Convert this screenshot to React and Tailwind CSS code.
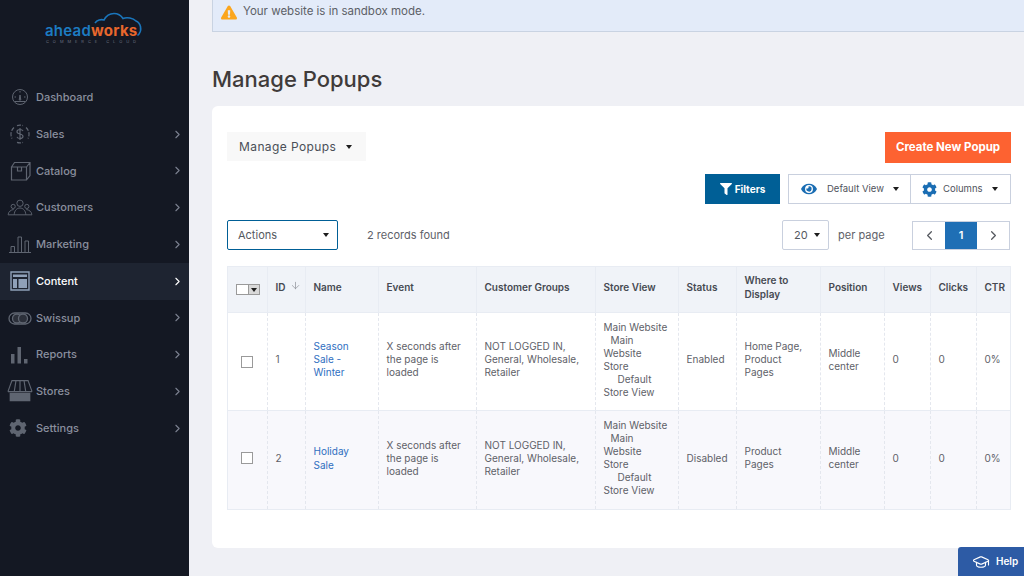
import { ChevronLeft, ChevronRight, ArrowDown, GraduationCap } from "lucide-react";
import { FaCog, FaEye, FaFilter, FaExclamationTriangle } from "react-icons/fa";

const iconCls = "w-[24px] h-[24px] text-[#5f6571]";

function DashboardIcon() {
  return (
    <svg viewBox="0 0 24 24" className={iconCls} fill="none" stroke="currentColor" strokeWidth="1">
      <circle cx="12" cy="12" r="7.5" />
      <path d="M12 6v1.5M6.5 12H8M16 12h1.5M12 10l-.8 5h1.6zM6.5 16.5h11" />
    </svg>
  );
}

function SalesIcon() {
  return (
    <svg viewBox="0 0 24 24" className={iconCls} fill="none" stroke="currentColor" strokeWidth="1.2">
      <path d="M6 5.5a9 9 0 0 0-2 11M18 5.5a9 9 0 0 1 2 11M9 3.6a9 9 0 0 1 6 0M9 20.4a9 9 0 0 0 6 0" strokeDasharray="4 1.5" />
      <path d="M15 9c-.5-1-1.600-1.500-3-1.500-1.700 0-3 .8-3 2.200 0 3 6 1.600 6 4.600 0 1.400-1.300 2.200-3 2.200-1.500 0-2.600-.6-3-1.600M12 6v12" />
    </svg>
  );
}

function CatalogIcon() {
  return (
    <svg viewBox="0 0 24 24" className={iconCls} fill="none" stroke="currentColor" strokeWidth="1.2">
      <path d="M3.500 8h15v13h-15zM3.500 8l3-4.500h15.500v13L18.500 21M18.500 8L22 3.500M9.500 8v4h4V8" />
    </svg>
  );
}

function CustomersIcon() {
  return (
    <svg viewBox="0 0 24 24" className="w-[24px] h-[24px] text-[#5f6571] scale-[1.05]" fill="none" stroke="currentColor" strokeWidth="0.9">
      <circle cx="12" cy="7.500" r="3" />
      <circle cx="5.500" cy="10.500" r="2" />
      <circle cx="18.500" cy="10.500" r="2" />
      <path d="M6.500 18.500c0-4 2.500-6.500 5.500-6.500s5.500 2.500 5.500 6.500zM6 13.500c-2.500 0-5 2-5.500 5h6M18 13.500c2.500 0 5 2 5.500 5h-6" />
    </svg>
  );
}

function MarketingIcon() {
  return (
    <svg viewBox="0 0 24 24" className={iconCls} fill="none" stroke="currentColor" strokeWidth="1">
      <path d="M1 20.500h22M3 20.500v-6h3.500v6M10 20.500V5h3.500v15.500M17 20.500V9h3.500v11.500" />
    </svg>
  );
}

function ContentIcon() {
  return (
    <svg viewBox="0 0 24 24" className="w-[24px] h-[24px] text-[#8fa0b8]" fill="none">
      <path d="M3 3h18v18H3z" stroke="currentColor" strokeWidth="1.400" />
      <path d="M5 5.500h14v2.500H5zM5 10h4v9H5zM10.500 10H19v9h-8.500z" fill="currentColor" />
    </svg>
  );
}

function SwissupIcon() {
  return (
    <svg viewBox="0 0 24 24" className={iconCls} fill="none" stroke="currentColor" strokeWidth="1.300">
      <rect x="1" y="7" width="22" height="11" rx="5.500" />
      <circle cx="9" cy="12.500" r="4.500" fill="#2c303a" />
      <circle cx="15" cy="12.500" r="4.500" fill="#2c303a" />
    </svg>
  );
}

function ReportsIcon() {
  return (
    <svg viewBox="0 0 24 24" className={iconCls} fill="currentColor">
      <path d="M3 11h3.500v9.500H3zM9.500 4H13v16.500H9.500zM16 16h3.500v4.500H16z" />
    </svg>
  );
}

function StoresIcon() {
  return (
    <svg viewBox="0 0 24 24" className="w-[24px] h-[24px] text-[#5f6571] scale-[1.15]" fill="none" stroke="currentColor">
      <path d="M1.500 12.500L5 3h14l3.500 9.500M8.500 3L7 12.500M12 3v9.500M15.500 3l1.500 9.500M1.500 12.500h21" strokeWidth="1" />
      <path d="M3 13.500h18V21H3z" fill="currentColor" stroke="none" />
    </svg>
  );
}

function SettingsIcon() {
  return <FaCog className="w-[18px] h-[18px] mx-[1px] my-[3px] text-[#5f6571]" />;
}

const menuItems = [
  { label: "Dashboard", Icon: DashboardIcon },
  { label: "Sales", Icon: SalesIcon, arrow: true },
  { label: "Catalog", Icon: CatalogIcon, arrow: true },
  { label: "Customers", Icon: CustomersIcon, arrow: true },
  { label: "Marketing", Icon: MarketingIcon, arrow: true },
  { label: "Content", Icon: ContentIcon, arrow: true, active: true },
  { label: "Swissup", Icon: SwissupIcon, arrow: true },
  { label: "Reports", Icon: ReportsIcon, arrow: true },
  { label: "Stores", Icon: StoresIcon, arrow: true },
  { label: "Settings", Icon: SettingsIcon, arrow: true },
];

const storeViewLines = (
  <>
    Main Website
    <br />
    <span className="pl-[7px]">Main</span>
    <br />
    Website
    <br />
    Store
    <br />
    <span className="pl-[14px]">Default</span>
    <br />
    Store View
  </>
);

const rows = [
  {
    id: 1,
    name: ["Season", "Sale -", "Winter"],
    status: "Enabled",
    display: ["Home Page,", "Product", "Pages"],
    rowCls: "bg-white h-[98px]",
    linkCls: "leading-[13px]",
    checkCls: "",
  },
  {
    id: 2,
    name: ["Holiday", "Sale"],
    status: "Disabled",
    display: ["Product", "Pages"],
    rowCls: "bg-[#f8f8fc] h-[99px]",
    linkCls: "leading-[14px]",
    checkCls: "pb-[4px]",
  },
];

function Caret() {
  return <span className="inline-block w-0 h-0 border-x-[3px] border-x-transparent border-t-[4px] border-t-[#1d1d1d]" />;
}

function Logo() {
  return (
    <div className="relative h-[79px]">
      <svg viewBox="0 0 50 26" className="absolute left-[94px] top-[12px] w-[50px] h-[26px]" fill="none" stroke="#1a75bb" strokeWidth="1.600">
        <path d="M1 11c2-3 6-4 9-3 2-4 6-6.500 10-6.500 4 0 7 2 9 5 4-1.500 10-.5 13 2.500 5 2 6 9 3 13l-1.500 1.500" />
      </svg>
      <div className="absolute left-[45px] top-[22px] text-[15px] leading-[18px] font-semibold tracking-[0.25px]">
        <span className="text-[#1d7cc2]">ahead</span>
        <span className="text-[#e8672c] font-bold">works</span>
      </div>
      <div className="absolute left-[46px] top-[39px] text-[4px] leading-[5px] tracking-[3.950px] text-[#6a7080] whitespace-nowrap">
        COMMERCE CLOUD
      </div>
    </div>
  );
}

function Sidebar() {
  return (
    <aside className="w-[189px] shrink-0 bg-[#141823] flex flex-col">
      <Logo />
      <nav className="flex flex-col">
        {menuItems.map(({ label, Icon, arrow, active }) => (
          <div
            key={label}
            className={`h-[36.750px] flex items-center text-[11px] font-medium ${
              active ? "bg-[#1e2431] text-white" : "text-[#8a8f9e]"
            }`}
          >
            <span className="w-[36px] pl-[8px] shrink-0 flex">
              <Icon />
            </span>
            <span>{label}</span>
            {arrow && (
              <ChevronRight
                className={`ml-auto mr-[5px] w-[13px] h-[13px] ${active ? "text-white" : "text-[#7b8090]"}`}
              />
            )}
          </div>
        ))}
      </nav>
    </aside>
  );
}

function Toolbar() {
  return (
    <>
      <div className="flex justify-between items-start">
        <button className="h-[29px] w-[139px] bg-[#f8f8f8] flex items-center pl-[12px] gap-[10px] text-[12px] tracking-[0.4px] text-[#4a4f57]">
          Manage Popups
          <Caret />
        </button>
        <button className="h-[31px] w-[126px] bg-[#fd6231] text-white text-[11.500px] font-bold">Create New Popup</button>
      </div>

      <div className="flex justify-end mt-[11px]">
        <button className="h-[30px] w-[75px] bg-[#005f96] text-white text-[10px] font-bold flex items-center justify-center gap-[3px]">
          <FaFilter className="w-[12px] h-[12px]" />
          Filters
        </button>
        <div className="ml-[8px] h-[30px] flex border border-[#c9d0de] text-[9.500px] text-[#4f535c]">
          <button className="w-[121px] flex items-center pl-[11px] gap-[9px]">
            <FaEye className="w-[18px] h-[14px] text-[#1a6db3]" />
            Default View
            <Caret />
          </button>
          <button className="w-[100px] border-l border-[#c9d0de] flex items-center pl-[11px] gap-[6px]">
            <FaCog className="w-[15px] h-[15px] text-[#1a6db3]" />
            Columns
            <span className="ml-[3px] flex">
              <Caret />
            </span>
          </button>
        </div>
      </div>

      <div className="flex items-center mt-[16px] h-[30px]">
        <button className="h-[30px] w-[111px] border border-[#005f96] rounded-[2px] flex items-center justify-between pl-[10px] pr-[8px] text-[11px] text-[#55595f]">
          Actions
          <Caret />
        </button>
        <span className="ml-[29px] text-[11px] text-[#5e6168]">2 records found</span>
        <button className="ml-auto h-[30px] w-[47px] border border-[#c9d0de] rounded-[2px] flex items-center pl-[11px] gap-[6px] text-[11px] text-[#55595f]">
          20
          <Caret />
        </button>
        <span className="ml-[9px] w-[74px] text-[11px] text-[#5e6168]">per page</span>
        <div className="h-[29px] w-[98px] mr-[1px] flex border border-[#c9d0de] text-[#55595f]">
          <button className="flex-1 flex items-center justify-center">
            <ChevronLeft className="w-[15px] h-[15px]" />
          </button>
          <button className="flex-1 bg-[#1f6fb5] text-white text-[11px] font-semibold">1</button>
          <button className="flex-1 flex items-center justify-center">
            <ChevronRight className="w-[15px] h-[15px]" />
          </button>
        </div>
      </div>
    </>
  );
}

const headCls = "border border-[#e8ecf3] px-[7.500px] pb-[6px] text-left font-semibold align-middle";
const cellCls = "border-x border-dashed border-x-[#e4e7ee] px-[7.500px] pb-[4px] align-middle";
const checkCellCls = "border-x border-dashed border-x-[#e4e7ee] pl-[13px] align-middle";

function PopupTable() {
  return (
    <table className="mt-[16px] w-[783px] table-fixed border-collapse border border-[#e8ecf3] text-[10px] leading-[13px] text-[#5e6168]">
      <colgroup>
        <col className="w-[40px]" />
        <col className="w-[38px]" />
        <col className="w-[73px]" />
        <col className="w-[98px]" />
        <col className="w-[119px]" />
        <col className="w-[83px]" />
        <col className="w-[58px]" />
        <col className="w-[84px]" />
        <col className="w-[64px]" />
        <col className="w-[46px]" />
        <col className="w-[46px]" />
        <col className="w-[34px]" />
      </colgroup>
      <thead>
        <tr className="h-[46px] bg-[#f0f3f8] text-[#464a52] leading-[14px]">
          <th className="border border-[#e8ecf3] pl-[7.500px] align-middle">
            <div className="flex">
              <span className="w-[13px] h-[11px] border border-[#9a9a9a] bg-white" />
              <span className="w-[12px] h-[11px] -ml-px border border-[#9a9a9a] bg-[#d9d9d9] flex items-center justify-center">
                <Caret />
              </span>
            </div>
          </th>
          <th className={headCls}>
            <div className="flex items-center justify-between">
              ID
              <ArrowDown className="w-[11px] h-[11px] -mr-[3px] -mt-[3px] text-[#8a8d94]" strokeWidth={1.500} />
            </div>
          </th>
          <th className={headCls}>Name</th>
          <th className={headCls}>Event</th>
          <th className={headCls}>Customer Groups</th>
          <th className={headCls}>Store View</th>
          <th className={headCls}>Status</th>
          <th className={headCls}>
            Where to
            <br />
            Display
          </th>
          <th className={headCls}>Position</th>
          <th className={headCls}>Views</th>
          <th className={headCls}>Clicks</th>
          <th className={headCls}>CTR</th>
        </tr>
      </thead>
      <tbody>
        {rows.map((row) => (
          <tr key={row.id} className={`${row.rowCls} border-t border-[#e8ecf3]`}>
            <td className={`${checkCellCls} ${row.checkCls}`}>
              <span className="block w-[12px] h-[12px] border border-[#9a9a9a] bg-white" />
            </td>
            <td className={cellCls}>{row.id}</td>
            <td className={`${cellCls} text-[#2f6fbf] ${row.linkCls}`}>
              {row.name.map((part) => (
                <div key={part}>{part}</div>
              ))}
            </td>
            <td className={cellCls}>
              X seconds after
              <br />
              the page is
              <br />
              loaded
            </td>
            <td className={cellCls}>
              NOT LOGGED IN,
              <br />
              General, Wholesale,
              <br />
              Retailer
            </td>
            <td className={cellCls}>{storeViewLines}</td>
            <td className={cellCls}>{row.status}</td>
            <td className={cellCls}>
              {row.display.map((part) => (
                <div key={part}>{part}</div>
              ))}
            </td>
            <td className={cellCls}>
              Middle
              <br />
              center
            </td>
            <td className={cellCls}>0</td>
            <td className={cellCls}>0</td>
            <td className={cellCls}>0%</td>
          </tr>
        ))}
      </tbody>
    </table>
  );
}

export default function App() {
  return (
    <div className="relative w-[1024px] h-[576px] overflow-hidden flex bg-[#eff0f5] antialiased font-['Inter','Open_Sans',sans-serif]">
      <Sidebar />
      <main className="flex-1 pl-[23px] flex flex-col">
        <div className="h-[32px] bg-[#e3ebf9] border-l border-b border-[#c9d3e2] flex items-center pl-[8px] gap-[6px] pb-[7px] text-[11.500px] text-[#5c6067]">
          <FaExclamationTriangle className="w-[16px] h-[15px] text-[#fba61e]" />
          Your website is in sandbox mode.
        </div>
        <h1 className="mt-[32px] h-[30px] text-[22px] leading-[30px] font-medium text-[#3f3b3a]">Manage Popups</h1>
        <section className="mt-[12px] h-[442px] bg-white rounded-l-[6px] pl-[15px] pr-[14px] pt-[26px]">
          <Toolbar />
          <PopupTable />
        </section>
      </main>
      <div className="absolute right-0 bottom-0 w-[66px] h-[29px] bg-[#2d5ba5] rounded-tl-[3px] flex items-center pl-[14px] gap-[6px] text-white text-[10px] font-semibold">
        <GraduationCap className="w-[18px] h-[18px]" strokeWidth={1.500} />
        Help
      </div>
    </div>
  );
}
